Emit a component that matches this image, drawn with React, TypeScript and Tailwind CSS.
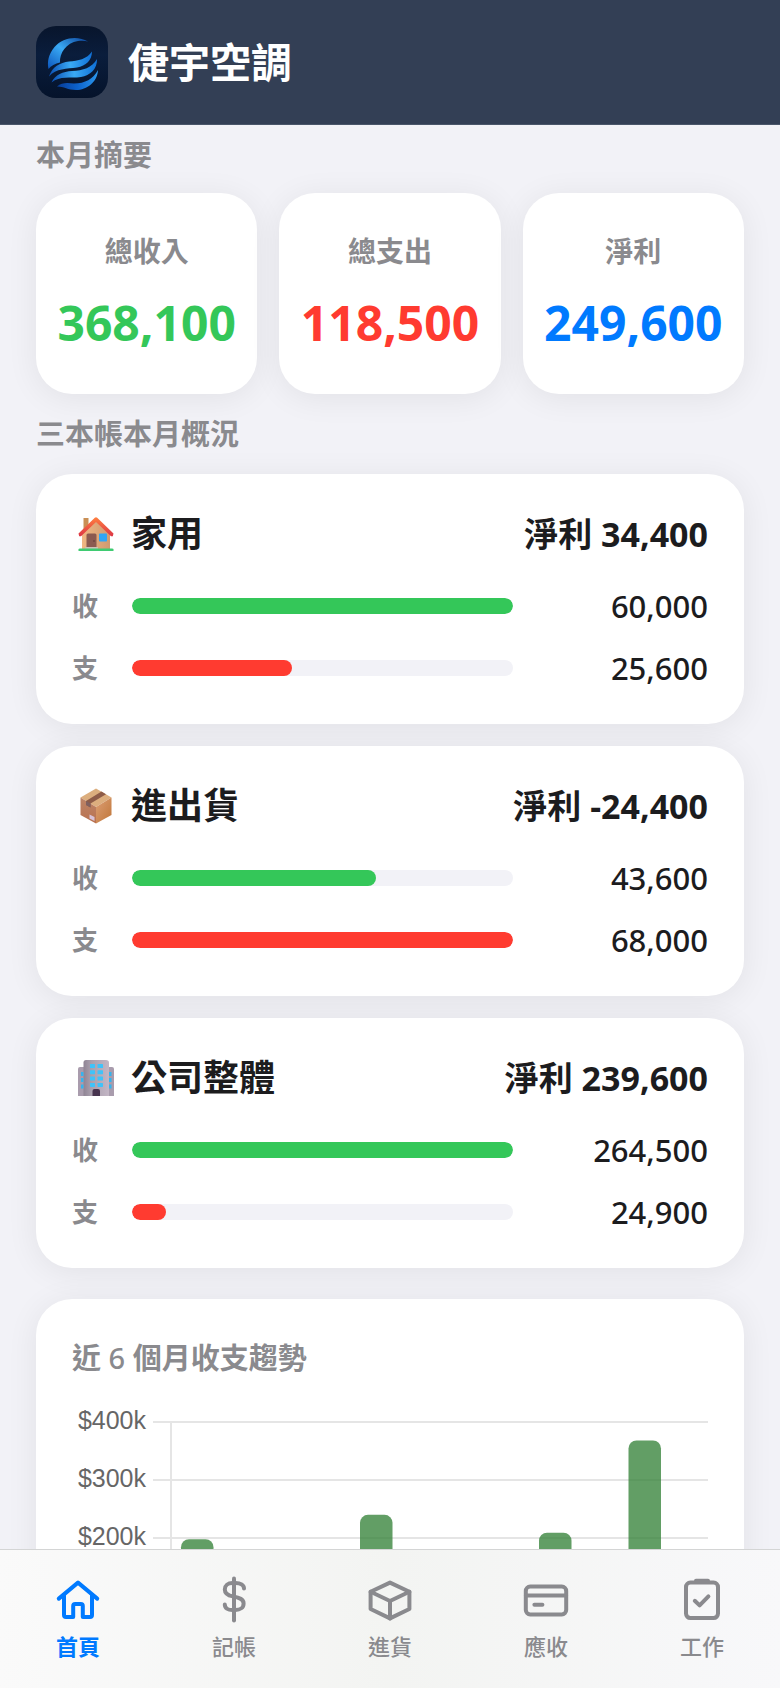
import { useState } from "react";

interface Book {
  id: string;
  name: string;
  net: string;
  income: number;
  expense: number;
}

const summary = [
  { label: "總收入", value: "368,100", color: "text-[#34c759]" },
  { label: "總支出", value: "118,500", color: "text-[#ff3b30]" },
  { label: "淨利", value: "249,600", color: "text-[#007aff]" },
];

const books: Book[] = [
  { id: "home", name: "家用", net: "34,400", income: 60000, expense: 25600 },
  { id: "goods", name: "進出貨", net: "-24,400", income: 43600, expense: 68000 },
  { id: "company", name: "公司整體", net: "239,600", income: 264500, expense: 24900 },
];

const trend = [
  { income: 198000, expense: 92000 },
  { income: 150000, expense: 84000 },
  { income: 240000, expense: 110000 },
  { income: 165000, expense: 96000 },
  { income: 209000, expense: 88000 },
  { income: 368100, expense: 118500 },
];

const tabs = [
  { id: "home", label: "首頁" },
  { id: "entry", label: "記帳" },
  { id: "stock", label: "進貨" },
  { id: "due", label: "應收" },
  { id: "work", label: "工作" },
];

const Logo = () => (
  <svg viewBox="0 0 72 72" className="size-18 rounded-[20px]" aria-hidden="true">
    <defs>
      <linearGradient id="logoBg" x1="0" y1="0" x2="0" y2="1">
        <stop offset="0" stopColor="#08152c" />
        <stop offset="0.4" stopColor="#0a1d3c" />
        <stop offset="1" stopColor="#05132b" />
      </linearGradient>
      <linearGradient id="logoArc" x1="1" y1="0" x2="0" y2="1">
        <stop offset="0" stopColor="#0a3f96" />
        <stop offset="0.5" stopColor="#3aaaf5" />
        <stop offset="1" stopColor="#0b55bd" />
      </linearGradient>
      <linearGradient id="logoWave" x1="0" y1="0" x2="1" y2="0">
        <stop offset="0" stopColor="#0a4fb5" />
        <stop offset="0.5" stopColor="#3aaaf5" />
        <stop offset="1" stopColor="#0f6fd6" />
      </linearGradient>
      <linearGradient id="logoBase" x1="0" y1="0" x2="1" y2="0">
        <stop offset="0" stopColor="#083c96" />
        <stop offset="0.5" stopColor="#0c62cc" />
        <stop offset="1" stopColor="#2b98ee" />
      </linearGradient>
    </defs>
    <rect width="72" height="72" fill="url(#logoBg)" />
    <path d="M52 15.500C42 9.500 27 11 18.500 21C12.500 28 11 36 12.500 43C15 40 19 37.500 24 36.500C23.500 27 30 17 42 15C45 14.500 49 14.500 52 15.500Z" fill="url(#logoArc)" />
    <path d="M13 50.500C16 41 24 36.500 33 35.500C42 35 51 33 56 25.500C56 34 50 40 41 41.500C31 43 20 42 13 50.500Z" fill="url(#logoWave)" />
    <path d="M15.500 56.500C19 48.500 27 45.500 36 45C47 44.500 56 42 61 33C61.500 43 54 49.500 45 51C34 52.500 24 49.500 15.500 56.500Z" fill="url(#logoWave)" />
    <path d="M21 60.500C26 56 32 57 38 57.500C49 57.500 57 53 62 44C61.500 56 51 64 40 64C32 64 28 60.500 21 60.500Z" fill="url(#logoBase)" />
  </svg>
);

const BookIcon = ({ id }: { id: string }) => {
  if (id === "home") {
    return (
      <svg viewBox="0 0 36 36" className="size-9" aria-hidden="true">
        <defs>
          <linearGradient id="wall" x1="0" y1="0" x2="1" y2="0">
            <stop offset="0" stopColor="#f0b783" />
            <stop offset="1" stopColor="#cf9a70" />
          </linearGradient>
          <linearGradient id="roof" x1="0" y1="0" x2="0" y2="1">
            <stop offset="0" stopColor="#ff8040" />
            <stop offset="1" stopColor="#dc3545" />
          </linearGradient>
        </defs>
        <rect x="5.500" y="2" width="5" height="12" fill="#c98f55" />
        <path d="M4 17L18 4L32 17V33H4Z" fill="url(#wall)" />
        <path d="M1.200 20.200L0.500 17.500L16.800 1.800Q18 0.800 19.200 1.800L35.500 17.500L34.800 20.200H33L18 6L3 20.200Z" fill="url(#roof)" />
        <path d="M8.500 32V19Q8.500 17.500 10 17.500H17Q18.500 17.500 18.500 19V32Z" fill="#8b5a50" />
        <circle cx="16" cy="25" r="0.800" fill="#5c3833" />
        <rect x="21" y="17.500" width="8" height="8" rx="0.800" fill="#2fa5f5" />
        <rect x="7" y="31" width="13" height="2" fill="#cfc0b8" />
        <path d="M0.500 35V33.500Q0.500 32.500 2 32.500H34Q35.500 32.500 35.500 33.500V35Z" fill="#3fcb72" />
      </svg>
    );
  }
  if (id === "goods") {
    return (
      <svg viewBox="0 0 36 36" className="size-9" aria-hidden="true">
        <defs>
          <linearGradient id="boxLeft" x1="0" y1="0" x2="0" y2="1">
            <stop offset="0" stopColor="#bd8568" />
            <stop offset="1" stopColor="#b9714f" />
          </linearGradient>
          <linearGradient id="boxRight" x1="0" y1="0" x2="1" y2="1">
            <stop offset="0" stopColor="#dc9f75" />
            <stop offset="1" stopColor="#c07639" />
          </linearGradient>
        </defs>
        <path d="M2.500 9.500L18 0.500L33.500 9.500L18 19Z" fill="#dcae7e" />
        <path d="M2.500 9.500L18 19V35.500L2.500 27Z" fill="url(#boxLeft)" />
        <path d="M33.500 9.500L18 19V35.500L33.500 27Z" fill="url(#boxRight)" />
        <path d="M8 13L23.500 3.500L28 6.200L12.500 15.600V19.500L8 17Z" fill="#8e5c48" />
        <path d="M8 13L12.500 15.600V19.500L8 17Z" fill="#80605f" />
        <path d="M11.500 26.500L16.500 29V33L11.500 30.500Z" fill="#d8c3d8" />
      </svg>
    );
  }
  return (
    <svg viewBox="0 0 36 36" className="size-9" aria-hidden="true">
      <defs>
        <linearGradient id="tower" x1="0" y1="0" x2="1" y2="0">
          <stop offset="0" stopColor="#8f8494" />
          <stop offset="0.300" stopColor="#a99fad" />
          <stop offset="1" stopColor="#c3b6c5" />
        </linearGradient>
      </defs>
      <path d="M0 36V9Q0 7 2 7H34Q36 7 36 9V36Z" fill="#a99cad" />
      <path d="M5.500 36V2.500Q5.500 0 8 0H28Q31 0 31 2.500V36Z" fill="url(#tower)" />
      <path d="M14.500 36V31Q14.500 29 16.500 29H20Q22 29 22 31V36Z" fill="#47344f" />
      {[4, 10.3, 16.6, 22.9].map((y) => (
        <g key={y} fill="#3fc3fa">
          <rect x="12" y={y} width="5" height="4" rx="0.600" />
          <rect x="19.500" y={y} width="5.500" height="4" rx="0.600" />
        </g>
      ))}
      {[12, 18, 24.5].map((y) => (
        <g key={y} fill="#35b4ee">
          <rect x="3" y={y} width="2.500" height="4" />
          <rect x="31" y={y} width="2.500" height="4" />
        </g>
      ))}
    </svg>
  );
};

const TabIcon = ({ id }: { id: string }) => (
  <svg
    viewBox="0 0 24 24"
    className="size-12"
    fill="none"
    stroke="currentColor"
    strokeWidth="2"
    strokeLinecap="round"
    strokeLinejoin="round"
    aria-hidden="true"
  >
    {id === "home" && (
      <>
        <path d="M2.400 11.300L12 3.300L21.600 11.300" />
        <path d="M5 9.500V19.500a1 1 0 0 0 1 1H9.600V15a1 1 0 0 1 1-1H13.400a1 1 0 0 1 1 1V20.500H18a1 1 0 0 0 1-1V9.500" />
      </>
    )}
    {id === "entry" && (
      <>
        <path d="M12 1.200V22.300" />
        <path d="M17 6.300C17 4.500 15.200 3.500 12.800 3.500H11.200C9 3.500 7.400 4.800 7.400 6.700C7.400 8.800 9 9.700 11.500 10.200C14.800 10.900 16.800 11.600 16.800 13.700C16.800 15.800 15 17 12.800 17H11.200C9 17 7.400 16 7.400 14.200" />
      </>
    )}
    {id === "stock" && (
      <>
        <path d="M12 3.300L21.700 7.900V16.500L12 21.200L2.300 16.500V7.900Z" />
        <path d="M2.300 7.900L12 12.500L21.700 7.900M12 12.500V21.200" />
      </>
    )}
    {id === "due" && (
      <>
        <rect x="1.900" y="5.300" width="20.200" height="13.900" rx="2.200" />
        <path d="M2 9.800H22" />
        <path d="M6.200 14.400H10.200" />
      </>
    )}
    {id === "work" && (
      <>
        <rect x="4" y="3.300" width="16" height="17.700" rx="2.200" />
        <path d="M9 2.400H15" />
        <path d="M8.400 12.400L10.800 14.700L15.200 10.200" />
      </>
    )}
  </svg>
);

const BarRow = ({ label, value, max, color }: { label: string; value: number; max: number; color: string }) => (
  <div className="flex h-10 items-center gap-4">
    <span className="w-11 text-[26px] font-semibold text-[#8a8a8e]">{label}</span>
    <div className="h-4 flex-1 overflow-hidden rounded-full bg-[#f2f2f7]">
      <div className={`h-full rounded-full ${color}`} style={{ width: `${Math.floor((value / max) * 100)}%` }} />
    </div>
    <span className="w-[179px] text-right text-[31px] font-medium">{value.toLocaleString("en-US")}</span>
  </div>
);

const BookCard = ({ book }: { book: Book }) => {
  const max = Math.max(book.income, book.expense);
  return (
    <article className="rounded-[36px] bg-white p-9 shadow-[0_4px_32px_rgba(0,0,0,0.07)]">
      <div className="mb-7 flex h-12 items-center justify-between">
        <h3 className="flex items-center gap-[11px] text-[36px] font-semibold">
          <span className="flex w-12 justify-center">
            <BookIcon id={book.id} />
          </span>
          {book.name}
        </h3>
        <span className="text-[34px] font-bold">淨利 {book.net}</span>
      </div>
      <div className="flex flex-col gap-[22px]">
        <BarRow label="收" value={book.income} max={max} color="bg-[#34c759]" />
        <BarRow label="支" value={book.expense} max={max} color="bg-[#ff3b30]" />
      </div>
    </article>
  );
};

// 0 在 y=242，每 100k 為 58px
const TrendChart = () => (
  <svg viewBox="0 0 636 260" className="w-full overflow-visible" role="img" aria-label="近 6 個月收支趨勢">
    {[400, 300, 200, 100, 0].map((k) => {
      const y = 242 - (k * 58) / 100;
      return (
        <g key={k}>
          <line x1="81" x2="636" y1={y} y2={y} stroke="#e5e5e5" strokeWidth="2" />
          <text x="74" y={y + 7} textAnchor="end" fontSize="25" fill="#666666" fontFamily="Liberation Sans, Arial, sans-serif">
            ${k}k
          </text>
        </g>
      );
    })}
    <line x1="99" x2="99" y1="10" y2="242" stroke="#e5e5e5" strokeWidth="2" />
    {trend.map((m, i) => {
      const x = 109 + i * 89.5;
      const up = (m.income * 58) / 100000;
      const down = (m.expense * 58) / 100000;
      return (
        <g key={i}>
          <rect x={x} y={242 - up} width="32.500" height={up} rx="8" fill="#2e7d32" fillOpacity="0.750" />
          <rect x={x + 36} y={242 - down} width="32.500" height={down} rx="8" fill="#c62828" fillOpacity="0.750" />
        </g>
      );
    })}
  </svg>
);

const App = () => {
  const [active, setActive] = useState("home");

  return (
    <div className="flex h-screen flex-col overflow-hidden bg-[#f2f2f7] font-['Noto_Sans','Noto_Sans_CJK_TC',sans-serif] text-[#1c1c1e]">
      <header className="flex shrink-0 items-center gap-5 border-b border-[#4a566a] bg-[#333f55] px-9 py-[26px]">
        <Logo />
        <h1 className="text-[41px] leading-[72px] font-bold text-white">倢宇空調</h1>
      </header>

      <main className="min-h-0 flex-1 overflow-y-auto px-9 [scrollbar-width:none]">
        <h2 className="pt-[10px] pb-[18px] text-[29px] leading-10 font-semibold text-[#8a8a8e]">本月摘要</h2>
        <section className="grid grid-cols-3 gap-[22px]">
          {summary.map((s) => (
            <div
              key={s.label}
              className="flex flex-col items-center gap-[15px] rounded-[36px] bg-white pt-9 pb-9 shadow-[0_4px_32px_rgba(0,0,0,0.07)]"
            >
              <span className="text-[28px] leading-[44px] font-semibold text-[#8a8a8e]">{s.label}</span>
              <span className={`text-[48px] leading-[70px] font-bold ${s.color}`}>{s.value}</span>
            </div>
          ))}
        </section>

        <h2 className="pt-5 pb-5 text-[29px] leading-10 font-semibold text-[#8a8a8e]">三本帳本月概況</h2>
        <section className="flex flex-col gap-[22px]">
          {books.map((b) => (
            <BookCard key={b.id} book={b} />
          ))}
        </section>

        <section className="mt-[31px] mb-44 rounded-[36px] bg-white p-9 shadow-[0_4px_32px_rgba(0,0,0,0.07)]">
          <h2 className="mb-8 text-[29px] leading-[45px] font-semibold text-[#8a8a8e]">
            近 <span className="font-medium">6</span> 個月收支趨勢
          </h2>
          <TrendChart />
        </section>
      </main>

      <nav className="fixed inset-x-0 bottom-0 flex h-[139px] border-t border-[#d4d5d5] bg-linear-to-r from-[#fafafa] via-[#f3f4f2] to-[#f8f8fa]">
        {tabs.map((t) => (
          <button
            key={t.id}
            type="button"
            onClick={() => setActive(t.id)}
            aria-current={active === t.id ? "page" : undefined}
            className={`flex flex-1 flex-col items-center gap-1 pt-[26px] text-[22px] leading-9 ${
              active === t.id ? "font-semibold text-[#007aff]" : "font-medium text-[#8a8a8e]"
            }`}
          >
            <TabIcon id={t.id} />
            {t.label}
          </button>
        ))}
      </nav>
    </div>
  );
};

export default App;
